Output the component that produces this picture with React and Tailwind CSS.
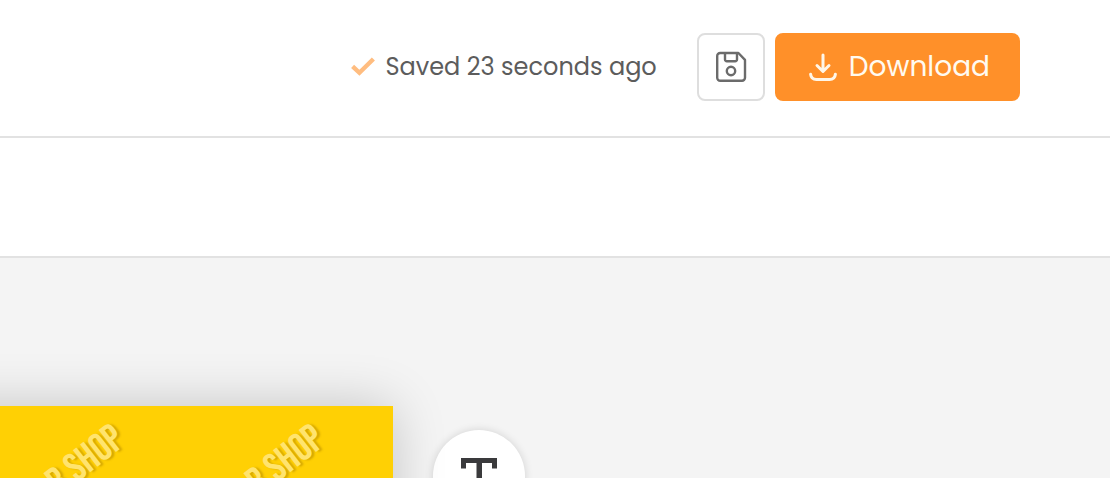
function CheckIcon() {
  return (
    <svg className="h-5 w-6 shrink-0" viewBox="0 0 24 20" fill="none" stroke="#ffbd80" strokeWidth="4.4" aria-hidden="true">
      <path d="M1.6 9.4 8.4 15.8 22.4 2" />
    </svg>
  );
}

function SaveIcon() {
  return (
    <svg className="size-8" viewBox="0 0 32 32" fill="none" stroke="#6b6b6b" strokeWidth="2.4" strokeLinejoin="round" aria-hidden="true">
      <path d="M5.2 2H23.4L30 8.8V26.8A3 3 0 0 1 27 29.8H5.2A3 3 0 0 1 2.2 26.8V5A3 3 0 0 1 5.2 2Z" />
      <path d="M10 2V8.4A1.8 1.8 0 0 0 11.8 10.2H20.2A1.8 1.8 0 0 0 22 8.4V2" />
      <circle cx="16" cy="20" r="4.2" />
    </svg>
  );
}

function DownloadIcon() {
  return (
    <svg className="size-8" viewBox="0 0 32 32" fill="none" stroke="#fff6e8" strokeWidth="3" strokeLinecap="round" strokeLinejoin="round" aria-hidden="true">
      <path d="M16 4V20M10 14.5 16 20.5 22 14.5" />
      <path d="M3.6 23.2C4 26.5 6 28.4 9.4 28.4H22.6C26 28.4 28 26.5 28.4 23.2" />
    </svg>
  );
}

function TextIcon() {
  return (
    <svg className="h-9 w-9" viewBox="0 0 36 36" fill="#3a3a3c" aria-hidden="true">
      <path d="M0 0H36V10.5H31V5H21V31H26V36H10V31H15.5V5H5V10.5H0Z" />
    </svg>
  );
}

function Watermark({ className }) {
  return (
    <span
      className={`absolute top-2 origin-right rotate-[-38deg] font-['Bebas_Neue','Roboto_Condensed',sans-serif] text-[40px] leading-10 font-normal whitespace-nowrap text-[#ffe46e] [text-shadow:2px_2px_2px_rgba(150,110,0,0.4)] ${className}`}
    >
      R SHOP
    </span>
  );
}

export default function App() {
  return (
    <div className="flex h-screen flex-col overflow-hidden bg-white font-[Poppins,Inter,sans-serif]">
      <header className="flex shrink-0 items-center justify-end border-b-2 border-[#e2e2e2] pt-[33px] pr-[90px] pb-[35px]">
        <p className="mr-10 flex items-center gap-[10px] text-2xl leading-8 whitespace-nowrap text-[#5c5c5c]">
          <CheckIcon />
          Saved 23 seconds ago
        </p>
        <div className="flex gap-[10px]">
          <button type="button" aria-label="Save" className="flex size-[68px] items-center justify-center rounded-lg border-2 border-[#dedede] bg-white">
            <SaveIcon />
          </button>
          <button type="button" className="flex h-[68px] items-center gap-[10px] rounded-lg bg-[#ff9029] pr-[30px] pl-8 text-[28px] leading-8 text-[#fffaf0]">
            <DownloadIcon />
            Download
          </button>
        </div>
      </header>
      <div className="h-[120px] shrink-0 border-b-2 border-[#e2e2e2]" />
      <main className="flex min-h-0 flex-1 items-start overflow-hidden bg-[#f4f4f4]">
        <section className="relative mt-[148px] -ml-20 h-[600px] w-[473px] shrink-0 bg-[#ffd004] shadow-[0_0_50px_rgba(0,0,0,0.2)]">
          <Watermark className="right-[273px]" />
          <Watermark className="right-[73px]" />
        </section>
        <button type="button" aria-label="Add text" className="mt-[172px] ml-10 flex h-[92px] w-[92px] shrink-0 items-center justify-center rounded-full bg-white shadow-[0_0_8px_rgba(0,0,0,0.14)]">
          <TextIcon />
        </button>
      </main>
    </div>
  );
}
